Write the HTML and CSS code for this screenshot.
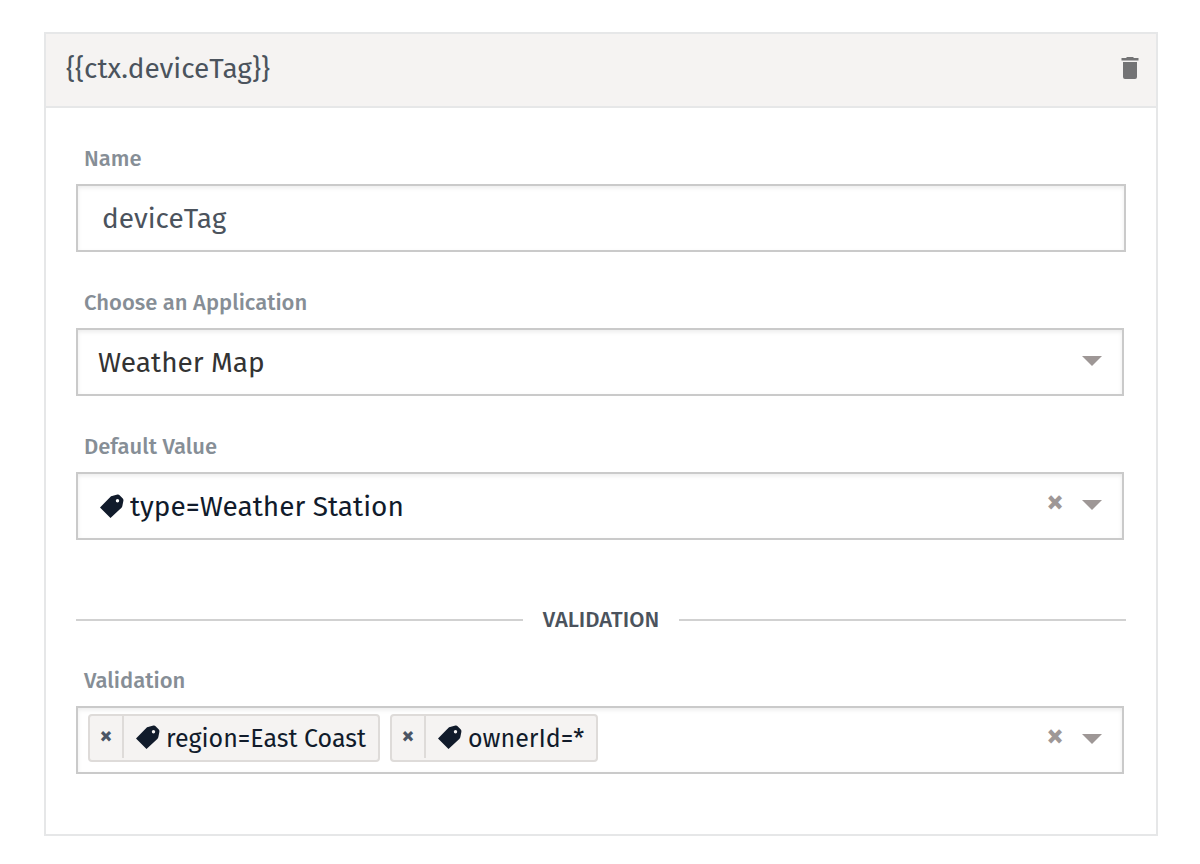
FILE: index.html
```html
<!DOCTYPE html>
<html lang="en">
<head>
    <meta charset="UTF-8">
    <meta name="viewport" content="width=device-width, initial-scale=1.0">
    <title>Context Variable</title>
    <link rel="stylesheet" href="styles.css">
</head>
<body>
    <svg class="symbols" aria-hidden="true">
        <symbol id="tag" viewBox="0 0 24 24">
            <path fill-rule="evenodd" d="M0 13.5 L10.3 3 Q11 2.2 12 2 L17.5 0.6 Q18.8 0.4 19.6 1.2 L22.8 4.6 Q23.6 5.5 23.4 6.8 L22.4 11.8 Q22.2 13 21.3 13.9 L10.5 24 Z M17.5 5 a1.7 1.7 0 1 0 0 3.4 a1.7 1.7 0 1 0 0 -3.4 Z"/>
        </symbol>
        <symbol id="caret" viewBox="0 0 20 10">
            <path d="M0 0 H20 L10 10 Z"/>
        </symbol>
    </svg>

    <form class="card">
        <header class="card-header">
            <h1>{{ctx.deviceTag}}</h1>
            <button type="button" class="delete" aria-label="Delete">
                <svg viewBox="0 0 18 22" width="18" height="22">
                    <path d="M6 0 H12 L13 1 H17.5 V3.5 H0.5 V1 H5 Z M2 5 H16 V20 Q16 22 14 22 H4 Q2 22 2 20 Z"/>
                </svg>
            </button>
        </header>

        <div class="card-body">
            <div class="field">
                <label for="name">Name</label>
                <input type="text" id="name" class="control text" value="deviceTag">
            </div>

            <div class="field">
                <label for="application">Choose an Application</label>
                <div class="control picker">
                    <select id="application">
                        <option>Weather Map</option>
                    </select>
                    <svg class="caret"><use href="#caret"/></svg>
                </div>
            </div>

            <div class="field">
                <label for="default">Default Value</label>
                <div class="control picker">
                    <svg class="tag"><use href="#tag"/></svg>
                    <select id="default">
                        <option>type=Weather Station</option>
                    </select>
                    <button type="button" class="clear" aria-label="Clear">×</button>
                    <svg class="caret"><use href="#caret"/></svg>
                </div>
            </div>

            <h2 class="divider">VALIDATION</h2>

            <div class="field">
                <label for="validation">Validation</label>
                <div class="control picker multi">
                    <div class="chip">
                        <button type="button" aria-label="Remove region">×</button>
                        <svg class="tag"><use href="#tag"/></svg>
                        <span>region=East Coast</span>
                    </div>
                    <div class="chip">
                        <button type="button" aria-label="Remove ownerId">×</button>
                        <svg class="tag"><use href="#tag"/></svg>
                        <span>ownerId=*</span>
                    </div>
                    <input type="text" id="validation">
                    <button type="button" class="clear" aria-label="Clear all">×</button>
                    <svg class="caret"><use href="#caret"/></svg>
                </div>
            </div>
        </div>
    </form>
</body>
</html>
```

FILE: styles.css
```css
* {
    box-sizing: border-box;
}

body {
    margin: 32px 42px 28px 44px;
    background: white;
    font-family: "Fira Sans", "Noto Sans", sans-serif;
    color: #4b535d;
}

button, input, select {
    font: inherit;
    color: inherit;
    background: none;
    border: none;
    padding: 0;
    margin: 0;
}

button {
    cursor: pointer;
}

.symbols {
    position: absolute;
    width: 0;
    height: 0;
}

.card {
    border: 2px solid #e6e7e8;
}

.card-header {
    display: flex;
    align-items: center;
    justify-content: space-between;
    padding: 15px 17px 17px 20px;
    background: #f5f3f2;
    border-bottom: 2px solid #e6e7e8;
}

.card-header h1 {
    margin: 0;
    font-size: 28px;
    font-weight: 400;
    line-height: 40px;
}

.delete svg {
    display: block;
    margin-bottom: 2px;
    fill: #737375;
}

.card-body {
    padding: 35px 30px 60px;
}

.field + .field {
    margin-top: 35px;
}

.field label {
    display: block;
    margin-bottom: 9px;
    padding-left: 8px;
    font-size: 22px;
    font-weight: 500;
    line-height: 32px;
    color: #868e96;
}

.control {
    height: 68px;
    border: 2px solid #cacaca;
    box-shadow: inset 0 2px 4px rgba(0, 0, 0, 0.08);
    font-size: 28px;
}

.text {
    display: block;
    width: 100%;
    padding: 0 24px;
}

.picker {
    display: flex;
    align-items: center;
    margin-right: 2px;
    padding: 0 20px;
    color: #111b2b;
}

.picker select {
    flex: 1;
    min-width: 0;
    height: 100%;
    appearance: none;
}

#application {
    color: #333;
}

.tag {
    flex: none;
    width: 24px;
    height: 24px;
    margin: 0 6px 0 2px;
    fill: #111b2b;
}

.caret {
    flex: none;
    width: 20px;
    height: 10px;
    margin-bottom: 2px;
    fill: #9e9796;
}

.clear {
    width: 22px;
    margin-right: 16px;
    padding-bottom: 8px;
    font-size: 34px;
    font-weight: 700;
    line-height: 40px;
    color: #9e9796;
}

.divider {
    display: flex;
    align-items: center;
    gap: 20px;
    margin: 64px 0 29px;
    font-size: 22px;
    font-weight: 500;
    line-height: 32px;
}

.divider::before,
.divider::after {
    content: "";
    flex: 1;
    height: 2px;
    background: #d1d1d1;
}

.multi {
    gap: 10px;
    padding-left: 10px;
}

.multi input {
    flex: 1;
    min-width: 0;
}

.multi .clear {
    margin-right: 6px;
}

.chip {
    display: flex;
    align-items: center;
    height: 48px;
    margin-bottom: 4px;
    padding: 0 12px 2px 0;
    border: 2px solid #dedbd9;
    border-radius: 4px;
    background: #f5f3f2;
    font-size: 25px;
}

.chip button {
    width: 34px;
    height: 100%;
    margin-right: 10px;
    padding-bottom: 2px;
    border-right: 2px solid #dedbd9;
    font-weight: 700;
    line-height: 36px;
    color: #4b5565;
}

.chip span {
    padding-top: 4px;
    white-space: nowrap;
}
```
